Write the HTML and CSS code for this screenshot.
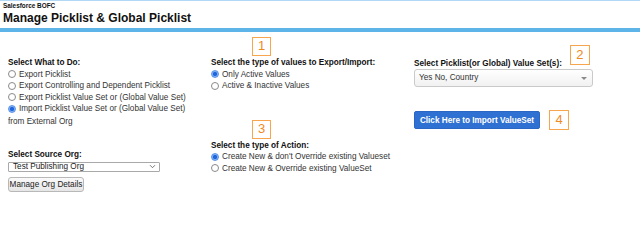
FILE: index.html
```html
<!DOCTYPE html>
<html lang="en">
<head>
  <meta charset="UTF-8" />
  <title>Manage Picklist &amp; Global Picklist</title>
  <link rel="stylesheet" href="styles.css">
</head>
<body>
  <header class="top">
    <div class="org-name">Salesforce BOFC</div>
    <h1>Manage Picklist &amp; Global Picklist</h1>
  </header>
  <div class="bar"></div>

  <div class="panel">
    <!-- colonna 1 -->
    <div class="col col-1">
      <div class="label">Select What to Do:</div>
      <label class="opt"><input type="radio" name="what"> Export Picklist</label>
      <label class="opt"><input type="radio" name="what"> Export Controlling and Dependent Picklist</label>
      <label class="opt"><input type="radio" name="what"> Export Picklist Value Set or (Global Value Set)</label>
      <label class="opt"><input type="radio" name="what" checked> Import Picklist Value Set or (Global Value Set)</label>
      <div class="opt-wrap">from External Org</div>

      <div class="label source">Select Source Org:</div>
      <div class="small-select">
        <span>Test Publishing Org</span>
        <svg width="7" height="5" viewBox="0 0 7 5"><path d="M1 1.2 L3.5 3.7 L6 1.2" fill="none" stroke="#666" stroke-width="0.9"/></svg>
      </div>
      <button class="btn-grey">Manage Org Details</button>
    </div>

    <!-- colonna 2 -->
    <div class="col col-2">
      <div class="badge">1</div>
      <div class="label">Select the type of values to Export/Import:</div>
      <label class="opt"><input type="radio" name="vals" checked> Only Active Values</label>
      <label class="opt"><input type="radio" name="vals"> Active &amp; Inactive Values</label>

      <div class="badge badge-3">3</div>
      <div class="label">Select the type of Action:</div>
      <label class="opt"><input type="radio" name="action" checked> Create New &amp; don't Override existing Valueset</label>
      <label class="opt"><input type="radio" name="action"> Create New &amp; Override existing ValueSet</label>
    </div>

    <!-- colonna 3 -->
    <div class="col col-3">
      <div class="label-row">
        <div class="label">Select Picklist(or Global) Value Set(s):</div>
        <div class="badge badge-2">2</div>
      </div>
      <div class="big-select">
        <span>Yes No, Country</span>
        <span class="caret"></span>
      </div>
      <div class="action-row">
        <button class="btn-blue">Click Here to Import ValueSet</button>
        <div class="badge">4</div>
      </div>
    </div>
  </div>
</body>
</html>
```

FILE: styles.css
```css
body {
  margin: 0;
  font-family: 'Liberation Sans', Arial, sans-serif;
  color: #111;
  background: #fff;
}

.top {
  border-top: 1px solid #b3d8f5;
  padding: 0 3px;
}

.org-name {
  font-size: 6.4px;
  font-weight: bold;
  line-height: 9px;
}

h1 {
  margin: 0;
  font-size: 12px;
  line-height: 17px;
}

.bar {
  margin-top: 1px;
  height: 4px;
  background: #5db4e8;
}

.panel {
  display: grid;
  grid-template-columns: 203px 203px auto;
  padding: 5px 0 0 8px;
  font-size: 8.2px;
  line-height: 11.5px;
}

.col {
  display: flex;
  flex-direction: column;
  align-items: flex-start;
}

.col-1 { padding-top: 20px; }
.col-3 { padding-top: 8px; }

.label {
  font-weight: bold;
}

.opt {
  display: flex;
  align-items: center;
  color: #333;
}

.opt input {
  appearance: none;
  width: 8px;
  height: 8px;
  margin: 0 3px 0 0;
  border: 1px solid #8a8a8a;
  border-radius: 50%;
  background: #fff;
}

.opt input:checked {
  border-color: #5b93e8;
  background: radial-gradient(circle, #1f66dd 0 1.8px, #7fb0f4 2.4px);
}

.opt-wrap {
  color: #333;
  padding-top: 1px;
}

.source {
  margin-top: 22px;
}

.small-select {
  box-sizing: border-box;
  width: 152px;
  height: 10px;
  margin-top: 1px;
  padding: 0 3px 0 4px;
  border: 1px solid #a9a9a9;
  border-radius: 1px;
  display: flex;
  justify-content: space-between;
  align-items: center;
  color: #222;
  line-height: 8px;
}

.btn-grey {
  margin-top: 5px;
  width: 76px;
  height: 15px;
  padding: 0;
  font: 8.2px 'Liberation Sans', Arial, sans-serif;
  color: #222;
  border: 1px solid #b8b8b8;
  border-radius: 3px;
  background: linear-gradient(#fafafa, #e6e6e6);
}

.badge {
  box-sizing: border-box;
  width: 19px;
  height: 19px;
  border: 1.5px solid #f7a64e;
  color: #ef8a22;
  font-size: 13px;
  line-height: 16px;
  text-align: center;
}

.col-2 .badge {
  margin-left: 41px;
  margin-bottom: 1px;
}

.col-2 .badge-3 {
  margin-top: 28px;
}

.label-row {
  display: flex;
  align-items: flex-end;
}

.badge-2 {
  width: 20px;
  height: 20px;
  margin: 0 0 4px 8px;
  line-height: 17px;
}

.big-select {
  box-sizing: border-box;
  width: 179px;
  height: 18px;
  padding: 0 5px 0 4px;
  border: 1px solid #cacaca;
  border-radius: 3px;
  background: linear-gradient(#fff, #f1f1f1);
  display: flex;
  justify-content: space-between;
  align-items: center;
  color: #333;
}

.caret {
  width: 0;
  height: 0;
  border-left: 3px solid transparent;
  border-right: 3px solid transparent;
  border-top: 3.5px solid #8a8a8a;
}

.action-row {
  margin-top: 23px;
  display: flex;
  align-items: center;
  gap: 9px;
}

.action-row .badge {
  width: 20px;
  height: 20px;
  line-height: 17px;
}

.btn-blue {
  width: 126px;
  height: 18px;
  padding: 0;
  border: 1px solid #2a66c4;
  border-radius: 2px;
  background: #2f71d2;
  color: #fff;
  font: bold 8.2px 'Liberation Sans', Arial, sans-serif;
}
```
